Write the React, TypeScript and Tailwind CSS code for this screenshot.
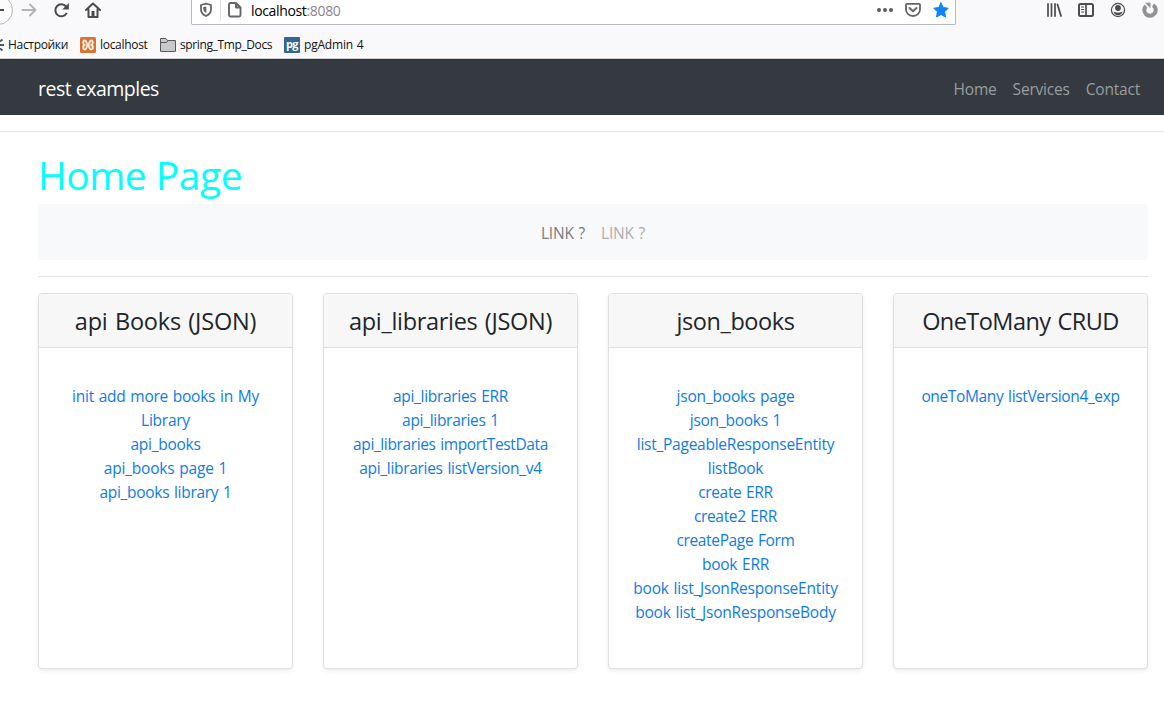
import type { ReactNode } from "react";

type Item = { label: string; track: string };
type CardData = { title: string; track: string; links: Item[] };

const cards: CardData[] = [
  {
    title: "api Books (JSON)",
    track: "tracking-[-0.2px]",
    links: [
      { label: "init add more books in My Library", track: "tracking-[-0.25px]" },
      { label: "api_books", track: "tracking-[-0.25px]" },
      { label: "api_books page 1", track: "tracking-[-0.2px]" },
      { label: "api_books library 1", track: "tracking-[-0.3px]" },
    ],
  },
  {
    title: "api_libraries (JSON)",
    track: "tracking-[-0.3px]",
    links: [
      { label: "api_libraries ERR", track: "tracking-[-0.3px]" },
      { label: "api_libraries 1", track: "tracking-[-0.3px]" },
      { label: "api_libraries importTestData", track: "tracking-[-0.38px]" },
      { label: "api_libraries listVersion_v4", track: "tracking-[-0.3px]" },
    ],
  },
  {
    title: "json_books",
    track: "tracking-[-0.4px]",
    links: [
      { label: "json_books page", track: "tracking-[-0.2px]" },
      { label: "json_books 1", track: "tracking-[-0.25px]" },
      { label: "list_PageableResponseEntity", track: "tracking-[-0.25px]" },
      { label: "listBook", track: "tracking-[-0.25px]" },
      { label: "create ERR", track: "tracking-[-0.35px]" },
      { label: "create2 ERR", track: "tracking-[-0.35px]" },
      { label: "createPage Form", track: "tracking-[-0.35px]" },
      { label: "book ERR", track: "tracking-[-0.25px]" },
      { label: "book list_JsonResponseEntity", track: "tracking-[-0.2px]" },
      { label: "book list_JsonResponseBody", track: "tracking-[-0.2px]" },
    ],
  },
  {
    title: "OneToMany CRUD",
    track: "tracking-[-0.55px]",
    links: [{ label: "oneToMany listVersion4_exp", track: "tracking-[-0.35px]" }],
  },
];

function Icon({ children, className = "" }: { children: ReactNode; className?: string }) {
  return (
    <svg viewBox="0 0 16 16" className={`block h-4 w-4 shrink-0 ${className}`} fill="none" stroke="#4c4c4f" strokeWidth="2" strokeLinecap="round" strokeLinejoin="round">
      {children}
    </svg>
  );
}

function Toolbar() {
  return (
    <div className="flex h-[25px] items-start">
      <svg viewBox="0 0 13 25" className="block h-[25px] w-[13px] shrink-0" fill="none">
        <circle cx="-2" cy="10" r="14.5" fill="#fcfcfc" stroke="#b5b5b8" />
        <path d="M0 10h4" stroke="#4c4c4f" strokeWidth="2" />
      </svg>
      <Icon className="ml-2 mt-0.5">
        <path d="M1.500 8h13M9 2.500 14.500 8 9 13.500" stroke="#b4b4b6" />
      </Icon>
      <Icon className="ml-4 mt-0.5">
        <path d="M13.700 11A6 6 0 1 1 13 4.500" strokeLinecap="butt" />
        <path d="M15.800 1v6.500H9.300z" fill="#4c4c4f" stroke="none" />
      </Icon>
      <Icon className="ml-4 mt-0.5">
        <path d="M1 8 8 1.500 15 8M3.500 7.500V15h9V7.500" />
        <path d="M6.500 9h3v5h-3z" fill="#4c4c4f" stroke="none" />
      </Icon>
      <div className="ml-[90px] flex h-[25px] w-[765px] shrink-0 rounded-b-[2px] border border-t-0 border-[#b9b9bb] bg-white">
        <Icon className="ml-1.5 mt-0.5">
          <path d="M8 1.700 13 3v4.500c0 3-2 5.200-5 6.500-3-1.300-5-3.500-5-6.500V3z" strokeWidth="1.800" stroke="#656568" />
          <path d="M8.300 4.500v6.500C6.300 10 5.300 8.800 5.300 7V5.100z" fill="#656568" stroke="none" />
        </Icon>
        <div className="ml-[6px] h-[21px] w-px bg-[#e4e4e6]" />
        <Icon className="ml-1.5 mt-0.5">
          <path d="M2 2.500A1.500 1.500 0 0 1 3.500 1h5.500L13.500 5.500V13a1.500 1.500 0 0 1-1.500 1.500H3.500A1.500 1.500 0 0 1 2 13zM9 1v4.500h4.500" strokeWidth="1.900" stroke="#656568" />
        </Icon>
        <span className="ml-2 mt-px text-[14px] leading-5 tracking-[-0.35px] text-black">
          localhost<span className="text-[#88888b]">:8080</span>
        </span>
        <div className="ml-auto mr-[6px] mt-0.5 flex gap-3">
          <Icon>
            <path d="M2 8h.01M8 8h.01M14 8h.01" strokeWidth="4" stroke="#5b5b5e" />
          </Icon>
          <Icon>
            <path d="M2 1.800h12a1 1 0 0 1 1 1V7.500a7 6.500 0 0 1-14 0V2.800a1 1 0 0 1 1-1z" strokeWidth="1.800" stroke="#656568" />
            <path d="m4.500 6 3.500 3.300L11.500 6" strokeWidth="1.900" stroke="#656568" />
          </Icon>
          <Icon>
            <path d="m8 .8 2.200 4.700 5 .7-3.600 3.600.9 5.200L8 12.500 3.500 15l.9-5.200L.8 6.200l5-.7z" fill="#0a84ff" stroke="#0a84ff" strokeWidth="1" />
          </Icon>
        </div>
      </div>
      <div className="ml-[90px] mt-0.5 flex gap-4">
        <Icon>
          <path d="M2 2v12M5.500 2v12M9 2v12" strokeLinecap="square" strokeWidth="1.700" />
          <path d="m11.500 2.500 3.500 11.500" strokeWidth="1.800" />
        </Icon>
        <Icon>
          <rect x="1" y="2" width="14" height="12" rx="1.500" />
          <path d="M8 2v12" strokeWidth="1.700" />
          <path d="M3.500 5h2.200M3.500 7.500h2.200M3.500 10h2.200" strokeWidth="1" />
        </Icon>
        <Icon>
          <circle cx="8" cy="8" r="6.600" strokeWidth="1.200" />
          <circle cx="8" cy="6" r="2.900" fill="#4c4c4f" stroke="none" />
          <path d="M3.500 9.500c2.200 1.500 6.800 1.500 9 0-.4 2.300-2.200 3.700-4.500 3.700S3.900 11.800 3.500 9.500z" fill="#4c4c4f" stroke="none" />
        </Icon>
        <Icon>
          <path d="M11 3.200A5.700 5.700 0 1 1 4 4" stroke="#929295" strokeWidth="4" strokeLinecap="butt" />
          <path d="M3 .8h5.500v5.500z" fill="#929295" stroke="none" />
        </Icon>
      </div>
    </div>
  );
}

function Bookmarks() {
  return (
    <div className="flex h-[33px] items-center pt-[6px] text-[12px] leading-4 text-[#111]">
      <svg viewBox="0 0 4 16" className="block h-4 w-1" stroke="#59595c" strokeWidth="2">
        <path d="M0 8h4M0 4.500l2.500-2M0 11.500l2.500 2" />
      </svg>
      <span className="ml-1 w-[60px] whitespace-nowrap tracking-[-0.32px]">Настройки</span>
      <svg viewBox="0 0 16 16" className="ml-3 block h-4 w-4 shrink-0">
        <rect width="16" height="16" rx="1.500" fill="#dd702e" />
        <path d="M5.500 8C2.500 8 2.500 3.500 4.800 3.500 7 3.500 6.500 8 8 8s1-4.500 3.200-4.500S13.500 8 10.500 8c3 0 3 4.500.7 4.500S9.500 8 8 8s-1 4.500-3.200 4.500S2.500 8 5.500 8z" fill="none" stroke="#fff3e8" strokeWidth="1.800" />
      </svg>
      <span className="ml-1 w-[48px] whitespace-nowrap tracking-[-0.3px]">localhost</span>
      <svg viewBox="0 0 16 16" className="ml-3 block h-4 w-4 shrink-0" fill="#c9c9ca" stroke="#59595b">
        <path d="M.5 14.500v-13h5.500l1.500 2h8v11z" />
        <path d="M.5 5.500h6l1.500-2" fill="none" />
      </svg>
      <span className="ml-1 w-[92px] whitespace-nowrap tracking-[-0.38px]">spring_Tmp_Docs</span>
      <span className="ml-3 flex h-4 w-4 shrink-0 items-center justify-center rounded-[1px] bg-[#336791] pb-[3px] text-[11px] font-bold leading-none tracking-[-0.5px] text-white">pg</span>
      <span className="ml-1 whitespace-nowrap tracking-[-0.2px] [word-spacing:1px]">pgAdmin 4</span>
    </div>
  );
}

function Card({ card }: { card: CardData }) {
  return (
    <section className="flex h-[376px] flex-col rounded border border-[#dfdfdf] bg-white text-center shadow-[0_2px_4px_rgba(0,0,0,0.075)]">
      <h4 className={`h-[54px] rounded-t-[3px] border-b border-[#dfdfdf] bg-[#f7f7f7] pt-[11px] text-[23.5px] leading-[32px] text-[#212529] [word-spacing:1.5px] ${card.track}`}>{card.title}</h4>
      <ul className="px-5 pt-[36px] text-[15.5px] leading-6 text-[#0d7ce6] [word-spacing:1px]">
        {card.links.map((link) => (
          <li key={link.label}>
            <a className={link.track}>{link.label}</a>
          </li>
        ))}
      </ul>
    </section>
  );
}

export default function App() {
  return (
    <div className="h-[728px] w-[1164px] overflow-hidden bg-white font-['Open_Sans','Noto_Sans',sans-serif]">
      <header className="h-[59px] border-b border-[#cfcfd2] bg-[#f9f9fb]">
        <Toolbar />
        <Bookmarks />
      </header>
      <nav className="flex h-14 items-center justify-between border-t border-[#2b2f3a] bg-[#343a40] pl-[38px] pr-6 pt-0.5">
        <span className="text-[19.5px] leading-[30px] tracking-[-0.5px] text-white">rest examples</span>
        <div className="flex gap-4 text-[15.5px] leading-6 tracking-[-0.2px] text-[#9a9da0]">
          <a>Home</a>
          <a>Services</a>
          <a>Contact</a>
        </div>
      </nav>
      <hr className="mt-4 border-[#e5e5e5]" />
      <main className="pl-[38px] pr-4 pt-4">
        <h1 className="h-14 text-[39px] leading-[54px] tracking-[-0.5px] text-[#00ffff]">Home Page</h1>
        <div className="flex h-14 items-center justify-center gap-4 rounded bg-[#f8f9fa] pt-0.5 text-[15.5px] leading-6 tracking-[-0.2px] [word-spacing:1px]">
          <a className="text-[#7c7d7d]">LINK ?</a>
          <a className="text-[#aeaeaf]">LINK ?</a>
        </div>
        <hr className="my-4 border-[#e5e5e5]" />
        <div className="grid grid-cols-4 gap-[30px]">
          {cards.map((card) => (
            <Card key={card.title} card={card} />
          ))}
        </div>
      </main>
    </div>
  );
}
